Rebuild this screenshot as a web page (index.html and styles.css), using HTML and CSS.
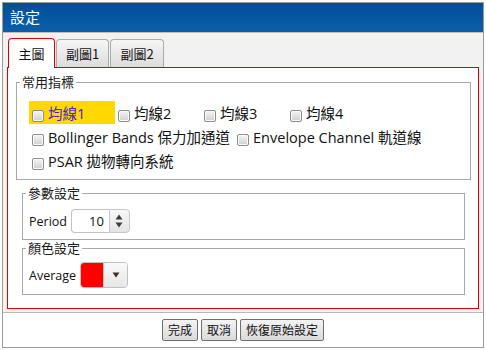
FILE: index.html
```html
<!DOCTYPE html>
<html lang="zh-Hant">
<head>
<meta charset="utf-8">
<title>設定</title>
<link rel="stylesheet" href="styles.css">
</head>
<body>
<div class="dialog">
  <div class="titlebar">設定</div>
  <div class="content">
    <div class="tabs">
      <div class="tab tab-main active">主圖</div>
      <div class="tab tab-sub1">副圖1</div>
      <div class="tab tab-sub2">副圖2</div>
    </div>
    <div class="panel">
      <fieldset class="group">
        <legend>常用指標</legend>
        <div class="opts">
          <div class="row">
            <label class="opt hl"><span class="cb"></span>均線1</label>
            <label class="opt"><span class="cb"></span>均線2</label>
            <label class="opt"><span class="cb"></span>均線3</label>
            <label class="opt"><span class="cb"></span>均線4</label>
          </div>
          <div class="row">
            <label class="opt"><span class="cb"></span>Bollinger Bands 保力加通道</label>
            <label class="opt"><span class="cb"></span>Envelope Channel 軌道線</label>
          </div>
          <div class="row">
            <label class="opt"><span class="cb"></span>PSAR 拋物轉向系統</label>
          </div>
        </div>
      </fieldset>
      <div class="sub">
        <fieldset class="group">
          <legend>參數設定</legend>
          <div class="param">
            <span class="lbl">Period</span>
            <span class="spin">
              <span class="spin-val">10</span>
              <span class="spin-btn">
                <svg width="8" height="15" viewBox="0 0 8 15"><path d="M4 0.5 L7.5 5.5 L0.5 5.5 Z" fill="#3d3d3d"/><path d="M0.5 8.5 L7.5 8.5 L4 13.5 Z" fill="#3d3d3d"/></svg>
              </span>
            </span>
          </div>
        </fieldset>
        <fieldset class="group">
          <legend>顏色設定</legend>
          <div class="param color-row">
            <span class="lbl">Average</span>
            <span class="color">
              <span class="swatch"></span>
              <span class="drop">
                <svg width="8" height="6" viewBox="0 0 8 6"><path d="M0.5 0.5 L7.5 0.5 L4 5.5 Z" fill="#3b2f2b"/></svg>
              </span>
            </span>
          </div>
        </fieldset>
      </div>
    </div>
  </div>
  <div class="footer">
    <button class="btn">完成</button>
    <button class="btn">取消</button>
    <button class="btn">恢復原始設定</button>
  </div>
</div>
</body>
</html>
```

FILE: styles.css
```css
* { box-sizing: border-box; }

body {
  margin: 0;
  background: #fff;
  font-family: "Open Sans", "Noto Sans CJK TC", sans-serif;
  color: #111;
}

.dialog {
  margin: 2px 0 0 2px;
  width: 482px;
  height: 346px;
  border: 1px solid #9c9c9c;
  display: flex;
  flex-direction: column;
  background: #fff;
}

.titlebar {
  height: 30px;
  flex: none;
  line-height: 28px;
  background: linear-gradient(#004f9b, #0a5ea7);
  border-bottom: 1px solid #cbbcaa;
  color: #fff;
  font-size: 15px;
  padding-left: 7px;
  font-family: "Noto Sans CJK TC", sans-serif;
}

.content {
  height: 280px;
  flex: none;
  background: #f2f2f2;
  border-bottom: 1px solid #b8b8b8;
  padding: 5px 4px 0;
}

.tabs {
  display: flex;
  align-items: flex-end;
  height: 29px;
  padding-left: 1px;
  gap: 1px;
}

.tab {
  height: 28px;
  border: 1px solid #ababab;
  border-bottom: none;
  border-radius: 4px 4px 0 0;
  background: linear-gradient(#f6f6f6, #dcdcdc);
  font-size: 13px;
  line-height: 27px;
  text-align: center;
  font-family: "Noto Sans CJK TC", sans-serif;
}

.tab-main { width: 47px; }
.tab-sub1 { width: 53px; }
.tab-sub2 { width: 54px; }

.tab.active {
  height: 30px;
  margin-bottom: -1px;
  border-color: #e00000;
  background: #fff;
  line-height: 29px;
  position: relative;
  z-index: 1;
}

.panel {
  height: 242px;
  border: 1px solid #e00000;
  background: #fff;
  padding: 6px 7px 0 8px;
}

fieldset {
  margin: 0;
  padding: 0;
  border: 1px solid #a8a8a8;
  min-width: 0;
}

legend {
  padding: 0 2px;
  margin-left: 3px;
  font-size: 13px;
  line-height: 16px;
  color: #1a1a1a;
  font-family: "Noto Sans CJK TC", sans-serif;
}

.opts {
  padding: 11px 0 6px 12px;
}

.row {
  display: flex;
  height: 24px;
}

.opt {
  display: flex;
  align-items: center;
  min-width: 86px;
  height: 23px;
  padding: 0 4px 0 3px;
  gap: 4px;
  font-size: 14.5px;
  white-space: nowrap;
}

.opt.hl {
  background: #ffd800;
  color: #4a1bd0;
}

.cb {
  flex: none;
  width: 12px;
  height: 12px;
  margin-top: 6px;
  border: 1px solid #8c8c8c;
  border-radius: 2px;
  background: linear-gradient(#f4f4f4, #cfcfcf);
  box-shadow: inset 0 0 0 1px #fafafa;
}

.sub {
  padding: 5px 6px 0;
}

.param {
  display: flex;
  align-items: center;
  padding: 8px 0 6px 6px;
  font-size: 12.5px;
}

.color-row {
  padding-top: 6px;
}

.lbl {
  margin-right: 4px;
}

.spin {
  display: flex;
  height: 24px;
}

.spin-val {
  width: 38px;
  border: 1px solid #c2c2c2;
  border-right: none;
  border-radius: 4px 0 0 4px;
  text-align: right;
  padding-right: 5px;
  line-height: 22px;
  font-size: 13px;
  background: #fff;
}

.spin-btn {
  width: 21px;
  border: 1px solid #c8c8c8;
  border-radius: 0 4px 4px 0;
  background: linear-gradient(#f8f8f8, #e4e4e4);
  display: flex;
  align-items: center;
  justify-content: center;
}

.color {
  display: flex;
  height: 26px;
  border: 1px solid #c0c0c0;
  border-radius: 4px;
  overflow: hidden;
}

.swatch {
  width: 22px;
  background: #ff0000;
}

.drop {
  width: 24px;
  background: linear-gradient(#fafafa, #e6e6e6);
  border-left: 1px solid #cfcfcf;
  display: flex;
  align-items: center;
  justify-content: center;
}

.footer {
  flex: 1;
  display: flex;
  justify-content: center;
  align-items: flex-start;
  gap: 3px;
  padding-top: 6px;
}

.btn {
  height: 22px;
  padding: 0 5px;
  margin: 0;
  border: 1px solid #6f6f6f;
  border-radius: 2px;
  background: linear-gradient(#f4f4f4, #dadada);
  font-size: 12px;
  line-height: 20px;
  font-family: "Noto Sans CJK TC", sans-serif;
  color: #111;
}
```
